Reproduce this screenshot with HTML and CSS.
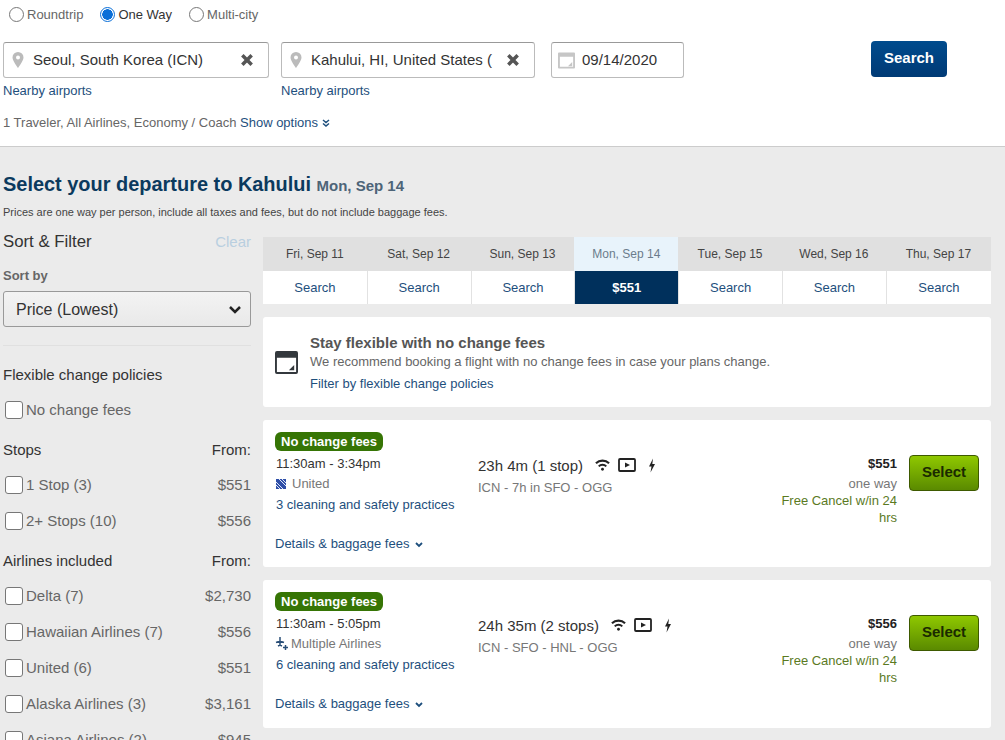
FILE: index.html
```html
<!DOCTYPE html>
<html lang="en-US">
  <head>
    <meta charset="UTF-8" />
    <title>Select your departure</title>
    <link rel="stylesheet" href="styles.css">
  </head>
  <body>
    <div class="search-panel">
      <div class="trip-types">
        <label class="trip"><span class="radio"></span>Roundtrip</label>
        <label class="trip trip-on"><span class="radio radio-on"></span>One Way</label>
        <label class="trip"><span class="radio"></span>Multi-city</label>
      </div>
      <div class="search-row">
        <div class="field-col col-from">
          <div class="field">
            <svg class="pin" viewBox="0 0 12 16"><path d="M6 0a5.5 5.5 0 0 0-5.5 5.500C.5 9 6 16 6 16s5.500-7 5.500-10.500A5.500 5.500 0 0 0 6 0zm0 7.500a2 2 0 1 1 0-4 2 2 0 0 1 0 4z"/></svg>
            <span class="field-text">Seoul, South Korea (ICN)</span>
            <svg class="clear-x" viewBox="0 0 12 12"><path d="M2 2l8 8M10 2l-8 8"/></svg>
          </div>
          <a class="link nearby">Nearby airports</a>
        </div>
        <div class="field-col col-to">
          <div class="field">
            <svg class="pin" viewBox="0 0 12 16"><path d="M6 0a5.5 5.5 0 0 0-5.5 5.500C.5 9 6 16 6 16s5.500-7 5.500-10.500A5.500 5.500 0 0 0 6 0zm0 7.500a2 2 0 1 1 0-4 2 2 0 0 1 0 4z"/></svg>
            <span class="field-text">Kahului, HI, United States (</span>
            <svg class="clear-x" viewBox="0 0 12 12"><path d="M2 2l8 8M10 2l-8 8"/></svg>
          </div>
          <a class="link nearby">Nearby airports</a>
        </div>
        <div class="field-col col-date">
          <div class="field">
            <svg class="cal" viewBox="0 0 18 18"><path fill-rule="evenodd" d="M0 1.500A1 1 0 0 1 1 .5h16a1 1 0 0 1 1 1v15a1 1 0 0 1-1 1H1a1 1 0 0 1-1-1zM2 5v10.500h14V5z"/><path d="M15 10.500V15h-4.500z"/></svg>
            <span class="field-text">09/14/2020</span>
          </div>
        </div>
        <button class="search-btn">Search</button>
      </div>
      <div class="options-line">1 Traveler, All Airlines, Economy / Coach <a class="link">Show options</a>
        <svg class="dbl-chev" viewBox="0 0 8 8"><path d="M1 1l3 2.500L7 1M1 4.500L4 7l3-2.500"/></svg>
      </div>
    </div>

    <div class="results-page">
      <h1 class="page-title">Select your departure to Kahului <span class="title-date">Mon, Sep 14</span></h1>
      <p class="disclaimer">Prices are one way per person, include all taxes and fees, but do not include baggage fees.</p>

      <div class="columns">
        <aside class="filters">
          <div class="filter-head">
            <span class="filter-title">Sort &amp; Filter</span>
            <span class="clear-link">Clear</span>
          </div>
          <div class="sort-label">Sort by</div>
          <div class="sort-select">
            <span>Price (Lowest)</span>
            <svg class="select-chev" viewBox="0 0 14 10"><path d="M2 2l5 5 5-5"/></svg>
          </div>
          <hr class="filter-rule"/>
          <div class="group-head group-first"><span>Flexible change policies</span></div>
          <div class="check-row"><span class="box"></span><span class="check-name">No change fees</span></div>
          <div class="group-head"><span>Stops</span><span>From:</span></div>
          <div class="check-row"><span class="box"></span><span class="check-name">1 Stop (3)</span><span class="check-price">$551</span></div>
          <div class="check-row"><span class="box"></span><span class="check-name">2+ Stops (10)</span><span class="check-price">$556</span></div>
          <div class="group-head"><span>Airlines included</span><span>From:</span></div>
          <div class="check-row"><span class="box"></span><span class="check-name">Delta (7)</span><span class="check-price">$2,730</span></div>
          <div class="check-row"><span class="box"></span><span class="check-name">Hawaiian Airlines (7)</span><span class="check-price">$556</span></div>
          <div class="check-row"><span class="box"></span><span class="check-name">United (6)</span><span class="check-price">$551</span></div>
          <div class="check-row"><span class="box"></span><span class="check-name">Alaska Airlines (3)</span><span class="check-price">$3,161</span></div>
          <div class="check-row"><span class="box"></span><span class="check-name">Asiana Airlines (2)</span><span class="check-price">$945</span></div>
        </aside>

        <main class="results">
          <div class="date-strip">
            <div class="day"><div class="day-name">Fri, Sep 11</div><div class="day-price">Search</div></div>
            <div class="day"><div class="day-name">Sat, Sep 12</div><div class="day-price">Search</div></div>
            <div class="day"><div class="day-name">Sun, Sep 13</div><div class="day-price">Search</div></div>
            <div class="day day-on"><div class="day-name">Mon, Sep 14</div><div class="day-price">$551</div></div>
            <div class="day"><div class="day-name">Tue, Sep 15</div><div class="day-price">Search</div></div>
            <div class="day"><div class="day-name">Wed, Sep 16</div><div class="day-price">Search</div></div>
            <div class="day"><div class="day-name">Thu, Sep 17</div><div class="day-price">Search</div></div>
          </div>

          <div class="card promo">
            <svg class="promo-icon" viewBox="0 0 24 24"><path fill-rule="evenodd" d="M2 0h20a2 2 0 0 1 2 2v20a2 2 0 0 1-2 2H2a2 2 0 0 1-2-2V2a2 2 0 0 1 2-2zm0 7v15h20V7z"/><path d="M20 14.500V20h-5.500z"/></svg>
            <div>
              <div class="promo-title">Stay flexible with no change fees</div>
              <div class="promo-text">We recommend booking a flight with no change fees in case your plans change.</div>
              <a class="link promo-link">Filter by flexible change policies</a>
            </div>
          </div>

          <div class="card flight">
            <div class="flight-left">
              <span class="fee-badge">No change fees</span>
              <div class="times">11:30am - 3:34pm</div>
              <div class="airline">
                <svg class="united-logo" viewBox="0 0 10 10"><rect width="10" height="10" fill="#2f4fa8"/><path d="M0 3l7 7M0 6l4 4M3 0l7 7M6 0l4 4" stroke="#dfe6f7" fill="none"/></svg>
                <span>United</span>
              </div>
              <a class="link cleaning">3 cleaning and safety practices</a>
              <a class="link details">Details &amp; baggage fees
                <svg class="small-chev" viewBox="0 0 8 6"><path d="M1 1l3 3 3-3"/></svg>
              </a>
            </div>
            <div class="flight-mid">
              <div class="duration">
                <span class="dur-text">23h 4m (1 stop)</span>
                <svg class="amenity wifi" viewBox="0 0 16 12"><path d="M1 4.200a10 10 0 0 1 14 0M4 7.500a5.500 5.500 0 0 1 8 0"/><circle cx="8" cy="10.500" r="1.500"/></svg>
                <svg class="amenity screen" viewBox="0 0 18 14"><rect x="1" y="1" width="16" height="12" rx="1"/><path class="fill" d="M7 4.500L12 7l-5 2.500z"/></svg>
                <svg class="amenity bolt" viewBox="0 0 8 14"><path class="fill" d="M5 0L1 8h2.500L2.500 14 7 5.500H4.300z"/></svg>
              </div>
              <div class="route">ICN - 7h in SFO - OGG</div>
            </div>
            <div class="flight-price">
              <div class="price">$551</div>
              <div class="one-way">one way</div>
              <div class="free-cancel">Free Cancel w/in 24 hrs</div>
            </div>
            <button class="select-btn">Select</button>
          </div>

          <div class="card flight">
            <div class="flight-left">
              <span class="fee-badge">No change fees</span>
              <div class="times">11:30am - 5:05pm</div>
              <div class="airline">
                <svg class="multi-logo" viewBox="0 0 14 14"><path d="M5 0v9M1 5.500l4-1.500 4 1.500M3 9l2-1 2 1M10.500 8v5M8 10.500h5"/></svg>
                <span>Multiple Airlines</span>
              </div>
              <a class="link cleaning">6 cleaning and safety practices</a>
              <a class="link details">Details &amp; baggage fees
                <svg class="small-chev" viewBox="0 0 8 6"><path d="M1 1l3 3 3-3"/></svg>
              </a>
            </div>
            <div class="flight-mid">
              <div class="duration">
                <span class="dur-text">24h 35m (2 stops)</span>
                <svg class="amenity wifi" viewBox="0 0 16 12"><path d="M1 4.200a10 10 0 0 1 14 0M4 7.500a5.500 5.500 0 0 1 8 0"/><circle cx="8" cy="10.500" r="1.500"/></svg>
                <svg class="amenity screen" viewBox="0 0 18 14"><rect x="1" y="1" width="16" height="12" rx="1"/><path class="fill" d="M7 4.500L12 7l-5 2.500z"/></svg>
                <svg class="amenity bolt" viewBox="0 0 8 14"><path class="fill" d="M5 0L1 8h2.500L2.500 14 7 5.500H4.300z"/></svg>
              </div>
              <div class="route">ICN - SFO - HNL - OGG</div>
            </div>
            <div class="flight-price">
              <div class="price">$556</div>
              <div class="one-way">one way</div>
              <div class="free-cancel">Free Cancel w/in 24 hrs</div>
            </div>
            <button class="select-btn">Select</button>
          </div>
        </main>
      </div>
    </div>
  </body>
</html>
```

FILE: styles.css
```css
html, body {
  margin: 0;
  height: 740px;
  overflow: hidden;
}
body {
  font-family: "Liberation Sans", Arial, sans-serif;
  font-size: 14px;
  color: #333;
  background: #fff;
}
.link {
  color: #1e4f7d;
}

/* search panel */
.search-panel {
  height: 147px;
  box-sizing: border-box;
  border-bottom: 1px solid #ccc;
  padding: 6px 0 0 3px;
}
.trip-types {
  display: flex;
  height: 16px;
  padding-left: 6px;
}
.trip {
  display: flex;
  align-items: center;
  font-size: 13px;
  color: #666;
  margin-right: 17px;
}
.trip-on {
  color: #333;
}
.radio {
  width: 13px;
  height: 13px;
  border: 1px solid #777;
  border-radius: 50%;
  margin-right: 3px;
  background: #fff;
}
.radio-on {
  border: 1px solid #0a6fd8;
  background: radial-gradient(circle, #0a6fd8 0 5px, #fff 5.5px);
}
.search-row {
  display: flex;
  margin-top: 20px;
}
.field-col {
  margin-right: 12px;
}
.col-from { width: 266px; }
.col-to { width: 254px; margin-right: 16px; }
.col-date { width: 133px; margin-right: 187px; }
.col-date .field { padding-left: 6px; }
.field {
  height: 36px;
  box-sizing: border-box;
  border: 1px solid #bbb;
  border-top-color: #999;
  border-radius: 3px;
  display: flex;
  align-items: center;
  padding-left: 8px;
  background: #fff;
}
.field-text {
  flex: 1;
  font-size: 15px;
  color: #333;
  white-space: nowrap;
  padding-bottom: 2px;
}
.pin {
  width: 12px;
  height: 16px;
  fill: #bbb;
  margin-right: 9px;
}
.clear-x {
  width: 14px;
  height: 14px;
  stroke: #555;
  stroke-width: 3;
  fill: none;
  margin-right: 14px;
}
.cal {
  width: 17px;
  height: 17px;
  fill: #c6c6c6;
  margin-right: 7px;
}
.nearby {
  display: block;
  font-size: 13px;
  margin-top: 5px;
}
.search-btn {
  width: 76px;
  height: 36px;
  margin-top: -1px;
  padding: 0 0 3px;
  border: 0;
  border-radius: 4px;
  background: linear-gradient(#004b8d, #003a75);
  color: #fff;
  font: bold 15px "Liberation Sans", Arial, sans-serif;
}
.options-line {
  font-size: 13px;
  color: #666;
  margin-top: 17px;
}
.dbl-chev {
  width: 8px;
  height: 8px;
  stroke: #1e4f7d;
  stroke-width: 1.5;
  fill: none;
}

/* results area */
.results-page {
  background: #ebebeb;
  height: 593px;
  padding: 26px 3px 0;
  box-sizing: border-box;
}
.page-title {
  margin: 0;
  font-size: 19.95px;
  line-height: 22px;
  color: #0b3a5e;
}
.title-date {
  font-size: 15px;
  color: #4d6478;
}
.disclaimer {
  margin: 9px 0 0;
  font-size: 11px;
  line-height: 12px;
  color: #444;
}
.columns {
  display: flex;
  margin-top: 19px;
}

/* filters */
.filters {
  width: 248px;
  margin-right: 12px;
  flex: none;
  color: #444;
}
.filter-head {
  display: flex;
  justify-content: space-between;
  font-size: 16.8px;
  line-height: 20px;
  margin-top: -5px;
}
.filter-title { color: #333; }
.clear-link {
  color: #b9cfe0;
  font-size: 15px;
}
.sort-label {
  font-size: 13px;
  font-weight: bold;
  color: #666;
  margin-top: 16px;
  line-height: 16px;
}
.sort-select {
  height: 36px;
  box-sizing: border-box;
  margin-top: 7px;
  border: 1px solid #999;
  border-radius: 3px;
  background: linear-gradient(#f3f3f3, #e9e9e9);
  display: flex;
  justify-content: space-between;
  align-items: center;
  padding: 1px 8px 0 12px;
  font-size: 16px;
  color: #333;
}
.select-chev {
  width: 14px;
  height: 10px;
  stroke: #222;
  stroke-width: 2.5;
  fill: none;
}
.filter-rule {
  border: 0;
  border-top: 1px solid #e0e0e0;
  margin: 18px 0 0;
}
.group-head {
  display: flex;
  justify-content: space-between;
  font-size: 15px;
  line-height: 18px;
  color: #333;
  margin: 13px 0 8px;
}
.group-first {
  margin-top: 20px;
}
.check-row {
  display: flex;
  align-items: center;
  height: 36px;
  font-size: 15px;
  color: #666;
  padding-left: 2px;
}
.box {
  width: 16px;
  height: 16px;
  border: 1px solid #777;
  border-radius: 3px;
  background: #fff;
  margin-right: 3px;
  flex: none;
}
.check-name { flex: 1; padding-bottom: 2px; }
.check-price { padding-bottom: 2px; }

/* date strip */
.results {
  width: 728px;
  flex: none;
}
.date-strip {
  display: grid;
  grid-template-columns: repeat(6, 103.8px) 1fr;
}
.day-name {
  height: 34px;
  line-height: 34px;
  text-align: center;
  font-size: 12px;
  color: #444;
  background: #e0e0e0;
}
.day-price {
  height: 33px;
  line-height: 33px;
  text-align: center;
  font-size: 13px;
  color: #1e4f7d;
  background: #fff;
  border-left: 1px solid #e2e2e2;
}
.day:first-child .day-price { border-left: 0; }
.day-on .day-name {
  background: #e8f3fb;
  color: #6b7c8c;
}
.day-on .day-price {
  background: #00305c;
  color: #fff;
  font-weight: bold;
}

/* cards */
.card {
  background: #fff;
  border-radius: 3px;
  margin-top: 13px;
}
.promo {
  height: 90px;
  display: flex;
  align-items: center;
  padding-left: 12px;
  box-sizing: border-box;
  font-size: 13px;
}
.promo-icon {
  width: 23px;
  height: 23px;
  fill: #33383d;
  margin-right: 12px;
  flex: none;
}
.promo-title {
  font-size: 15px;
  font-weight: bold;
  color: #555;
}
.promo-text {
  color: #666;
  margin-top: 3px;
}
.promo-link {
  display: block;
  margin-top: 7px;
}
.flight {
  height: 147px;
  display: flex;
  box-sizing: border-box;
  padding: 12px 12px 0 12px;
}
.flight + .flight {
  height: 148px;
}
.flight-left {
  width: 203px;
  flex: none;
  font-size: 13px;
}
.fee-badge {
  display: inline-block;
  background: #367505;
  color: #fff;
  font-weight: bold;
  padding: 0 6px;
  height: 19px;
  line-height: 19px;
  border-radius: 6px;
}
.times {
  margin-top: 5px;
  margin-left: 1px;
  color: #333;
  line-height: 15px;
}
.airline {
  color: #777;
  margin-top: 5px;
  line-height: 15px;
  display: flex;
  align-items: center;
}
.united-logo {
  width: 10px;
  height: 10px;
  margin: 0 6px 0 1px;
}
.multi-logo {
  width: 14px;
  height: 14px;
  stroke: #2a4f78;
  stroke-width: 1.5;
  fill: none;
  margin-right: 2px;
}
.cleaning {
  display: block;
  margin: 6px 0 0 1px;
  line-height: 16px;
}
.details {
  display: block;
  margin-top: 23px;
  line-height: 16px;
}
.small-chev {
  width: 8px;
  height: 6px;
  stroke: #1e4f7d;
  stroke-width: 1.8;
  fill: none;
  margin-left: 2px;
}
.flight-mid {
  flex: 1;
  padding-top: 24px;
}
.duration {
  display: flex;
  align-items: center;
  height: 18px;
}
.dur-text {
  font-size: 15px;
  color: #333;
  margin-right: 12px;
}
.amenity {
  stroke: #222;
  stroke-width: 1.8;
  fill: none;
}
.amenity .fill { fill: #222; stroke: none; }
.wifi { width: 15px; height: 12px; margin-right: 8px; stroke-width: 2.2; }
.wifi circle { fill: #222; stroke: none; }
.screen { width: 18px; height: 14px; margin-right: 12px; }
.bolt { width: 8px; height: 15px; }
.route {
  font-size: 13px;
  color: #777;
  margin-top: 6px;
}
.flight-price {
  width: 130px;
  text-align: right;
  font-size: 13px;
  margin-right: 12px;
  padding-top: 24px;
}
.price {
  font-weight: bold;
  color: #222;
}
.one-way {
  color: #777;
  margin-top: 5px;
}
.free-cancel {
  color: #5b7a1f;
  margin-top: 1px;
  line-height: 17px;
}
.select-btn {
  width: 70px;
  height: 36px;
  margin-top: 23px;
  padding: 0 0 3px;
  border: 1px solid #3e5a00;
  border-radius: 4px;
  background: linear-gradient(#8fc800, #5a8a00);
  color: #1a2a00;
  font: bold 15px "Liberation Sans", Arial, sans-serif;
}
```
